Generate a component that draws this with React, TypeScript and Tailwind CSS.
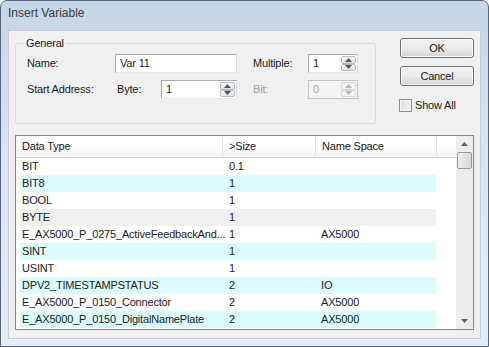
const rows = [
  { t: "BIT", s: "0.1", n: "", bg: "bg-white" },
  { t: "BIT8", s: "1", n: "", bg: "bg-[#dcfbfb]" },
  { t: "BOOL", s: "1", n: "", bg: "bg-white" },
  { t: "BYTE", s: "1", n: "", bg: "bg-[#f0f0f0]" },
  { t: "E_AX5000_P_0275_ActiveFeedbackAnd...", s: "1", n: "AX5000", bg: "bg-white" },
  { t: "SINT", s: "1", n: "", bg: "bg-[#dcfbfb]" },
  { t: "USINT", s: "1", n: "", bg: "bg-white" },
  { t: "DPV2_TIMESTAMPSTATUS", s: "2", n: "IO", bg: "bg-[#dcfbfb]" },
  { t: "E_AX5000_P_0150_Connector", s: "2", n: "AX5000", bg: "bg-white" },
  { t: "E_AX5000_P_0150_DigitalNamePlate", s: "2", n: "AX5000", bg: "bg-[#dcfbfb]" },
];

function Tri({ up, color }: { up?: boolean; color: string }) {
  return (
    <svg width="7" height="4" viewBox="0 0 7 4">
      <path d={up ? "M0 4 L3.5 0 L7 4 Z" : "M0 0 L3.5 4 L7 0 Z"} fill={color} />
    </svg>
  );
}

function SpinBtn({ up, disabled }: { up?: boolean; disabled?: boolean }) {
  return (
    <div
      className={
        disabled
          ? "flex flex-1 items-center justify-center rounded-[2px] border border-[#d8d8d8] bg-[#f4f4f4]"
          : "flex flex-1 items-center justify-center rounded-[2px] border border-[#b5bcc6] bg-gradient-to-b from-[#f7f8fa] to-[#dfe3e8]"
      }
    >
      <Tri up={up} color={disabled ? "#b8b8b8" : "#4d5560"} />
    </div>
  );
}

function Spin({ value, disabled }: { value: string; disabled?: boolean }) {
  return (
    <div
      className={
        disabled
          ? "flex h-[19px] w-[50px] border border-[#c4c4c4] bg-[#f4f4f4] text-[#a3a3a3]"
          : "flex h-[19px] w-[50px] border border-[#abadb3] border-b-[#e3e9ef] border-r-[#dbdfe6] bg-white"
      }
    >
      <span className="flex-1 pl-[4px] leading-[17px]">{value}</span>
      <div className="my-[1px] mr-[1px] flex w-[15px] flex-col">
        <SpinBtn up disabled={disabled} />
        <SpinBtn disabled={disabled} />
      </div>
    </div>
  );
}

function Button({ label }: { label: string }) {
  return (
    <div className="flex h-[20px] w-[74px] items-center justify-center rounded-[3px] border border-[#707070] bg-gradient-to-b from-[#f2f2f2] via-[#ebebeb] to-[#d6d6d6] shadow-[inset_0_0_0_1px_#fcfcfc]">
      {label}
    </div>
  );
}

export default function App() {
  return (
    <div className="flex h-[347px] w-[489px] flex-col rounded-t-[7px] border border-[#56667a] bg-gradient-to-b from-[#c6d5e8] via-[#dce6f1] to-[#e6ecf3] font-['Liberation_Sans',Arial,sans-serif] text-[11px] tracking-[-0.18px] text-[#1a1a1a]">
      <div className="flex h-[29px] items-center pb-[5px] pl-[7px] text-[12px] tracking-normal text-[#3a3a3a]">
        Insert Variable
      </div>
      <div className="mx-[7px] mb-[7px] flex flex-1 flex-col border border-[#c5ceda] bg-[#f0f0f0] px-[6px]">
        <div className="mt-[6px] flex">
          <fieldset className="h-[87px] w-[362px] rounded-[3px] border border-[#d5dbe2] pl-[11px]">
            <legend className="ml-[-3px] px-[2px] leading-[13px]">General</legend>
            <div className="mt-[4px] flex h-[19px] items-center">
              <span className="w-[88px]">Name:</span>
              <div className="h-[19px] w-[122px] border border-[#abadb3] border-b-[#e3e9ef] border-r-[#dbdfe6] bg-white pl-[4px] leading-[17px]">
                Var 11
              </div>
              <span className="ml-[16px] w-[55px]">Multiple:</span>
              <Spin value="1" />
            </div>
            <div className="mt-[7px] flex h-[19px] items-center">
              <span className="w-[90px]">Start Address:</span>
              <span className="w-[44px]">Byte:</span>
              <div className="flex h-[19px] w-[76px] border border-[#abadb3] border-b-[#e3e9ef] border-r-[#dbdfe6] bg-white">
                <span className="flex-1 pl-[4px] leading-[17px]">1</span>
                <div className="my-[1px] mr-[1px] flex w-[15px] flex-col">
                  <SpinBtn up />
                  <SpinBtn />
                </div>
              </div>
              <span className="ml-[16px] w-[55px] text-[#a0a0a0]">Bit:</span>
              <Spin value="0" disabled />
            </div>
          </fieldset>
          <div className="ml-[24px] flex flex-col pt-[1px]">
            <Button label="OK" />
            <div className="mt-[8px]">
              <Button label="Cancel" />
            </div>
            <div className="mt-[11px] flex items-center gap-[3px]">
              <div className="ml-[-1px] h-[13px] w-[13px] border border-[#8e8f8f] bg-gradient-to-br from-[#dcdcdc] to-[#f6f6f6] shadow-[inset_0_0_0_1px_#f4f4f4]" />
              <span>Show All</span>
            </div>
          </div>
        </div>
        <div className="mt-[11px] flex h-[195px] border border-[#828790] bg-white">
          <div className="flex flex-1 flex-col">
            <div className="flex h-[22px] border-b border-[#d5d5d5] bg-gradient-to-b from-white via-white to-[#f1f2f4] leading-[21px]">
              <div className="w-[207px] border-r border-[#e3e4e6] pl-[6px]">Data Type</div>
              <div className="w-[93px] border-r border-[#e3e4e6] pl-[6px]">&gt;Size</div>
              <div className="w-[121px] border-r border-[#e3e4e6] pl-[6px]">Name Space</div>
              <div className="flex-1" />
            </div>
            <div className="flex flex-col pl-[4px]">
              {rows.map((r) => (
                <div key={r.t} className={`flex h-[17px] w-[416px] items-center ${r.bg}`}>
                  <span className="w-[209px] pl-[2px]">{r.t}</span>
                  <span className="w-[92px]">{r.s}</span>
                  <span>{r.n}</span>
                </div>
              ))}
            </div>
          </div>
          <div className="flex w-[17px] flex-col bg-[#ececec]">
            <div className="flex h-[16px] items-center justify-center">
              <Tri up color="#606060" />
            </div>
            <div className="mx-[1px] h-[17px] rounded-[2px] border border-[#979797] bg-gradient-to-r from-[#f0f0f0] to-[#d8d8d8]" />
            <div className="flex-1" />
            <div className="flex h-[16px] items-center justify-center">
              <Tri color="#606060" />
            </div>
          </div>
        </div>
      </div>
    </div>
  );
}
